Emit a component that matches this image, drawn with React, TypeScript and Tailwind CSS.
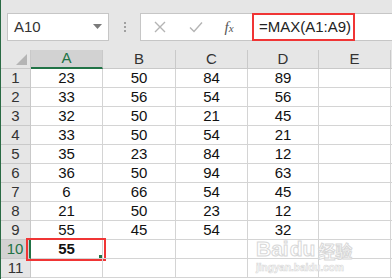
import React from "react";

const cols = ["A", "B", "C", "D", "E"];
const data = [
  [23, 50, 84, 89],
  [33, 56, 54, 56],
  [32, 50, 21, 45],
  [33, 50, 54, 21],
  [35, 23, 84, 12],
  [36, 50, 94, 63],
  [6, 66, 54, 45],
  [21, 50, 23, 12],
  [55, 45, 54, 32],
];

const App = () => {
  return (
    <div
      className="w-[392px] h-[279px] overflow-hidden bg-white border-l border-[#2a6a44] relative"
      style={{ fontFamily: '"Liberation Sans", Arial, sans-serif' }}
    >
      {/* ======= FORMULA BAR ======= */}
      <div className="h-[50px] bg-[#e6e6e6] flex items-start pt-[13px] pl-[6px]">
        {/* Name box */}
        <div className="w-[102px] h-[28px] bg-white border border-[#c6c6c6] flex items-center justify-between pl-[6px] pr-[6px]">
          <span className="text-[15px] text-[#333]">A10</span>
          <svg width="9" height="6" viewBox="0 0 9 6">
            <path d="M0 0 L9 0 L4.5 5 Z" fill="#7a7a7a" />
          </svg>
        </div>

        {/* dots */}
        <div className="w-[31px] h-[28px] flex flex-col items-center justify-center gap-[2px]">
          <div className="w-[2px] h-[2px] bg-[#a0a0a0]"></div>
          <div className="w-[2px] h-[2px] bg-[#a0a0a0]"></div>
          <div className="w-[2px] h-[2px] bg-[#a0a0a0]"></div>
        </div>

        {/* Buttons + formula */}
        <div className="flex-1 h-[28px] bg-white border border-r-0 border-[#c6c6c6] flex items-center">
          <div className="w-[37px] flex justify-center">
            <svg width="12" height="12" viewBox="0 0 12 12">
              <path d="M1 1 L11 11 M11 1 L1 11" stroke="#b4b4b4" strokeWidth="1.4" />
            </svg>
          </div>
          <div className="w-[36px] flex justify-center">
            <svg width="14" height="12" viewBox="0 0 14 12">
              <path d="M1 6.5 L5 10.5 L13 1.5" stroke="#b4b4b4" strokeWidth="1.4" fill="none" />
            </svg>
          </div>
          <div
            className="w-[30px] text-center text-[15px] italic text-[#555]"
            style={{ fontFamily: '"Liberation Serif", serif' }}
          >
            f<span className="text-[11px]">x</span>
          </div>
          <div className="w-[8px]"></div>
          <div className="h-[28px] w-[103px] border-2 border-[#f03535] flex items-center pl-[5px] -my-px">
            <span className="text-[15px] text-[#222]">=MAX(A1:A9)</span>
          </div>
        </div>
      </div>

      {/* ======= GRID ======= */}
      <div className="grid grid-cols-[30px_72px_73px_72px_71px_72px_2px] grid-rows-[19px] auto-rows-[19px] text-[15px] text-[#111]">
        {/* Header row */}
        <div className="bg-[#e6e6e6] border-r border-b border-[#c9c9c9] flex items-end justify-end pr-[3px] pb-[3px]">
          <svg width="11" height="11" viewBox="0 0 11 11">
            <path d="M11 0 L11 11 L0 11 Z" fill="#b5b5b5" />
          </svg>
        </div>
        {cols.map((c) => (
          <div
            key={c}
            className={
              c === "A"
                ? "bg-[#d2d2d2] border-r border-b-2 border-r-[#c9c9c9] border-b-[#217346] flex items-center justify-center text-[#217346]"
                : "bg-[#e6e6e6] border-r border-b border-[#c9c9c9] flex items-center justify-center text-[#333]"
            }
          >
            {c}
          </div>
        ))}
        <div className="bg-[#e6e6e6] border-b border-[#c9c9c9]"></div>

        {/* Data rows */}
        {Array.from({ length: 11 }).map((_, r) => {
          const row = data[r];
          return (
            <React.Fragment key={r}>
              <div
                className={
                  r === 9
                    ? "bg-[#d2d2d2] border-r-2 border-b border-r-[#217346] border-b-[#c9c9c9] flex items-center justify-center text-[#217346]"
                    : "bg-[#e6e6e6] border-r border-b border-[#c9c9c9] flex items-center justify-center text-[#333]"
                }
              >
                {r + 1}
              </div>
              {cols.map((c, ci) => (
                <div
                  key={c}
                  className="border-r border-b border-[#d4d4d4] flex items-center justify-center relative"
                >
                  {row && ci < 4 ? row[ci] : null}
                  {r === 9 && ci === 0 ? (
                    <>
                      <span className="font-bold">55</span>
                      <div className="absolute -left-[5px] -top-[2px] w-[80px] h-[23px] border-2 border-[#f03535]"></div>
                      <div className="absolute right-0 bottom-0 w-[3px] h-[3px] bg-[#217346]"></div>
                    </>
                  ) : null}
                </div>
              ))}
              <div className="border-b border-[#d4d4d4]"></div>
            </React.Fragment>
          );
        })}
      </div>

      {/* ======= WATERMARK ======= */}
      <div className="absolute left-[255px] top-[238px] flex flex-col items-start pointer-events-none">
        <div className="flex items-end text-[21px] font-bold leading-none text-white [-webkit-text-stroke:1px_#d8d8d8]">
          <span>Bai</span>
          <span className="ml-[1px]">du</span>
          <span className="text-[17px] ml-[3px]" style={{ fontFamily: '"Noto Sans CJK SC", sans-serif' }}>
            经验
          </span>
        </div>
        <div className="text-[10px] leading-none font-bold text-white [-webkit-text-stroke:0.6px_#d8d8d8] mt-[4px]">
          jingyan.baidu.com
        </div>
      </div>
    </div>
  );
};

export default App;
